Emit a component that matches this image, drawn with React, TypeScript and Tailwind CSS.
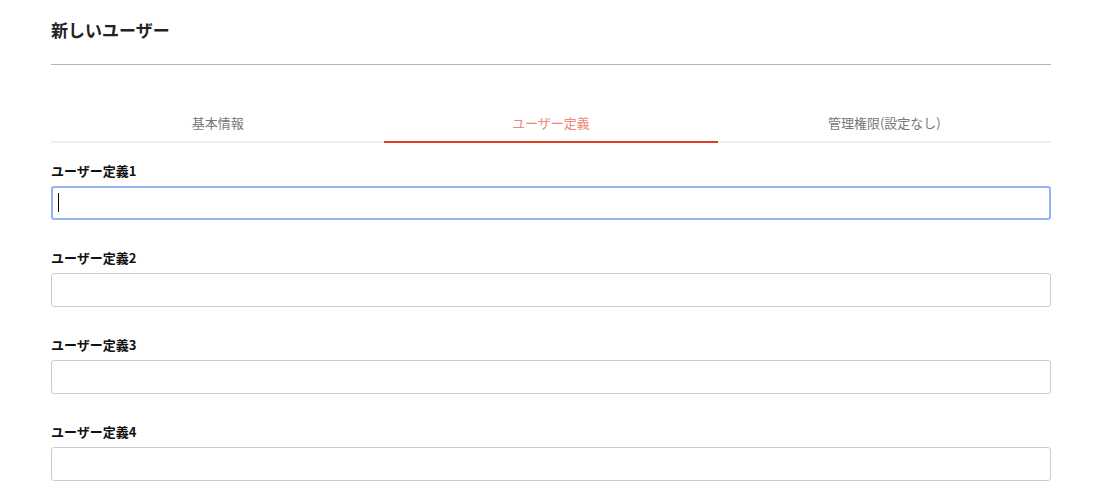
const tabs = ['基本情報', 'ユーザー定義', '管理権限(設定なし)'];

const Field = ({ label, focused }: { label: string; focused?: boolean }) => (
    <div className="flex flex-col">
        <label className="text-[13px] font-bold leading-[20px] text-[#111] mb-[5px]">{label}</label>
        <div className="relative">
            <input
                type="text"
                className={
                    focused
                        ? 'w-full h-[34px] rounded-[3px] border-2 border-[#93b3f3] px-[5px] outline-none'
                        : 'w-full h-[34px] rounded-[3px] border border-[#cccccc] px-[6px] outline-none'
                }
            />
            {focused && <span className="absolute left-[7px] top-[7px] w-[1px] h-[19px] bg-black" />}
        </div>
    </div>
);

const App = () => {
    return (
        <div className="min-h-[500px] bg-white pl-[51px] pr-[52px] pt-[18px]" style={{ fontFamily: '"Noto Sans CJK JP", "Noto Sans", sans-serif' }}>
            {/* Header */}
            <h1 className="text-[17px] font-bold leading-[24px] text-[#222]">新しいユーザー</h1>
            <div className="mt-[22px] h-[1px] bg-[#b3b3b3]" />

            {/* Tabs */}
            <div className="mt-[45px] grid grid-cols-3">
                {tabs.map((t, i) => (
                    <div
                        key={t}
                        className={
                            i === 1
                                ? 'h-[33px] pt-[3px] flex items-start justify-center text-[13px] leading-[20px] text-[#f1877c] border-b-2 border-[#e23c22]'
                                : 'h-[33px] pt-[3px] flex items-start justify-center text-[13px] leading-[20px] text-[#777] border-b-2 border-[#efefef]'
                        }
                    >
                        {t}
                    </div>
                ))}
            </div>

            {/* Fields */}
            <div className="mt-[18px] flex flex-col gap-[28px]">
                <Field label="ユーザー定義1" focused />
                <Field label="ユーザー定義2" />
                <Field label="ユーザー定義3" />
                <Field label="ユーザー定義4" />
            </div>
        </div>
    );
};

export default App;
